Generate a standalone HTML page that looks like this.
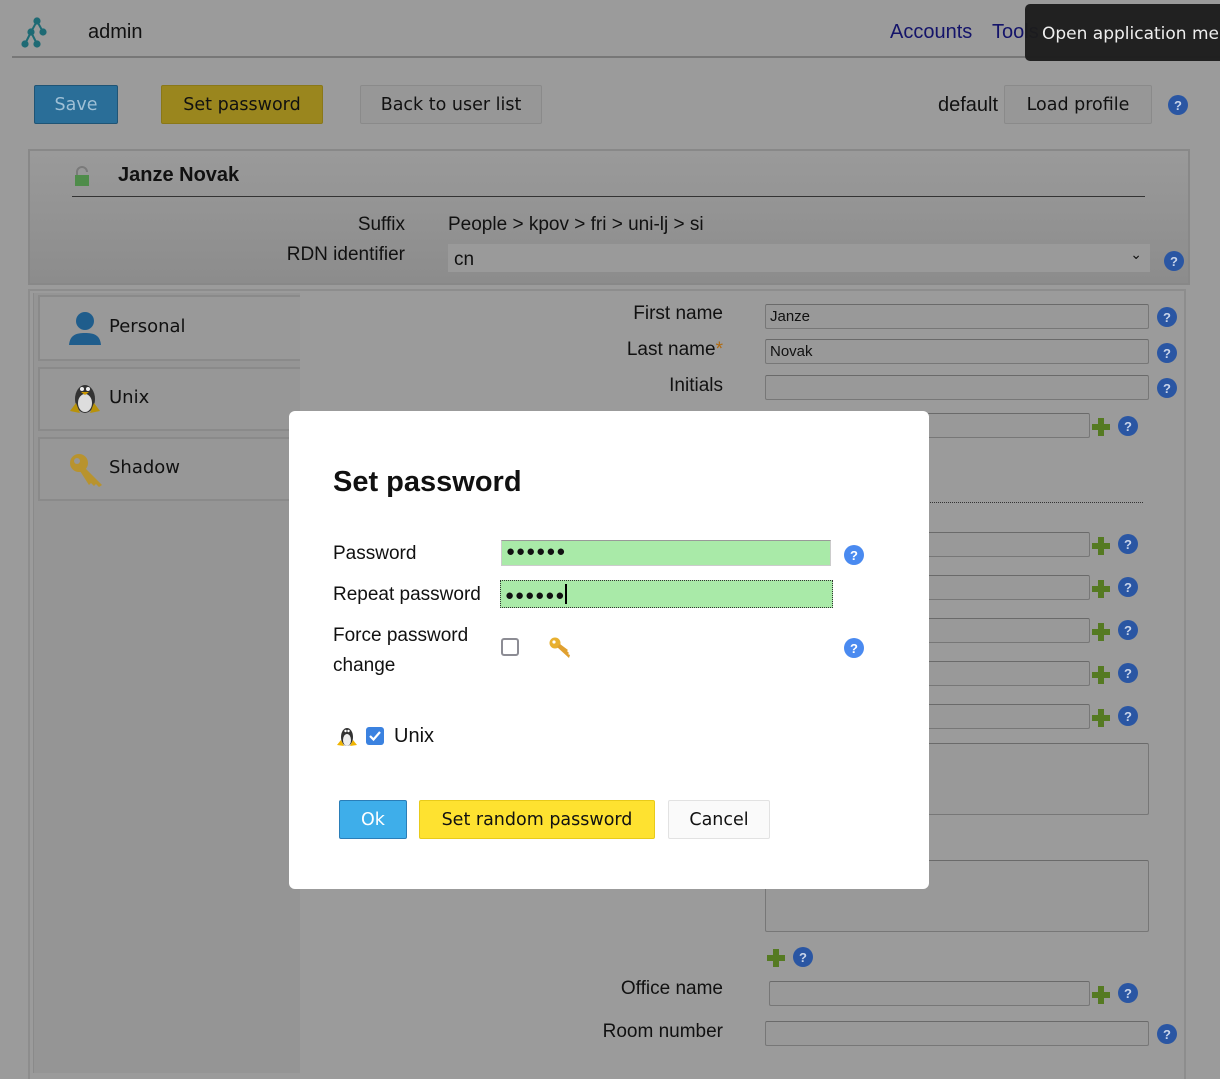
<!DOCTYPE html>
<html><head><meta charset="utf-8"><style>
*{box-sizing:border-box;margin:0;padding:0}
body{width:1220px;height:1070px;overflow:hidden;background:#9b9b9b;font-family:"Liberation Sans",sans-serif;position:relative;color:#111}
.a{position:absolute}
.btn{position:absolute;font-size:19px;display:flex;align-items:center;justify-content:center;border-radius:2px;font-family:"DejaVu Sans","Liberation Sans",sans-serif;font-size:17.5px}
.lbl{position:absolute;font-size:19px;text-align:right;color:#111}
.inp{position:absolute;height:25px;border:1px solid #777;border-top-color:#6a6a6a;background:#999;border-radius:2px;font-size:15px;padding:3px 4px;color:#111}
.h{position:absolute;width:20px;height:20px;border-radius:50%;background:#2a56a3;color:#c8d4ea;font-size:13px;font-weight:bold;display:flex;align-items:center;justify-content:center}
.hb{background:#4a8af0;color:#fff}
.p{position:absolute;width:18px;height:18px}
.p:before{content:"";position:absolute;left:6px;top:0;width:6px;height:18px;background:#557a22}
.p:after{content:"";position:absolute;left:0;top:6px;width:18px;height:6px;background:#557a22}
.tab{position:absolute;left:38px;width:262px;border:2px solid #8a8a8a;border-right:none;background:#979797;font-size:19px;color:#111;font-family:"DejaVu Sans","Liberation Sans",sans-serif;font-size:18px}
</style></head><body>
<svg class="a" style="left:20px;top:17px" width="32" height="32" viewBox="0 0 32 32"><g stroke="#1e6a74" stroke-width="2" fill="#1e6a74"><line x1="17" y1="4" x2="11" y2="15"/><line x1="17" y1="4" x2="23" y2="15"/><line x1="11" y1="15" x2="5" y2="27"/><line x1="11" y1="15" x2="17" y2="27"/><circle cx="17" cy="4" r="2.6"/><circle cx="11" cy="15" r="2.6"/><circle cx="23" cy="15" r="2.6"/><circle cx="5" cy="27" r="2.6"/><circle cx="17" cy="27" r="2.6"/></g></svg>
<div class="a" style="left:88px;top:21px;font-size:20px">admin</div>
<div class="a" style="left:890px;top:21px;font-size:20px;color:#14146a">Accounts</div>
<div class="a" style="left:992px;top:21px;font-size:20px;color:#14146a">Tools</div>
<div class="a" style="left:12px;top:56px;width:1208px;height:2px;background:#777"></div>
<div class="a" style="left:1025px;top:4px;width:200px;height:57px;background:rgba(28,28,28,0.96);border-radius:5px;color:#eee;font-size:18px;padding:20px 0 0 17px;white-space:nowrap;overflow:hidden;font-family:'DejaVu Sans',sans-serif;font-size:17px">Open application menu</div>
<div class="btn" style="left:34px;top:85px;width:84px;height:39px;background:#2a6e98;border:1px solid #1f5475;color:#9fc0d6">Save</div>
<div class="btn" style="left:161px;top:85px;width:162px;height:39px;background:#9a861e;border:1px solid #8a7818">Set password</div>
<div class="btn" style="left:360px;top:85px;width:182px;height:39px;background:#979797;border:1px solid #8a8a8a">Back to user list</div>
<div class="a" style="left:938px;top:94px;font-size:20px">default</div>
<div class="btn" style="left:1004px;top:85px;width:148px;height:39px;background:#979797;border:1px solid #8a8a8a">Load profile</div>
<div class="h" style="left:1168px;top:95px">?</div>
<div class="a" style="left:28px;top:149px;width:1162px;height:136px;border:2px solid #888;background:linear-gradient(#9a9a9a,#8c8c8c)"></div>
<svg class="a" style="left:74px;top:166px" width="16" height="20" viewBox="0 0 16 20"><path d="M3 9V6a5 5 0 0 1 10 0" stroke="#7a7a7a" stroke-width="2" fill="none"/><rect x="1" y="9" width="14" height="11" fill="#4f8c4a"/></svg>
<div class="a" style="left:118px;top:164px;font-size:20px;font-weight:bold">Janze Novak</div>
<div class="a" style="left:72px;top:196px;width:1073px;height:1px;background:#333"></div>
<div class="lbl" style="left:200px;width:205px;top:214px">Suffix</div>
<div class="a" style="left:448px;top:214px;font-size:19px">People &gt; kpov &gt; fri &gt; uni-lj &gt; si</div>
<div class="lbl" style="left:200px;width:205px;top:244px">RDN identifier</div>
<div class="a" style="left:448px;top:244px;width:702px;height:28px;background:#9a9a9a;font-size:19px;padding:5px 6px">cn<span style="position:absolute;right:8px;top:2px;font-size:14px">&#8964;</span></div>
<div class="h" style="left:1164px;top:251px">?</div>
<div class="a" style="left:28px;top:289px;width:1158px;height:790px;border:2px solid #8d8d8d;border-bottom:none"></div>
<div class="a" style="left:33px;top:293px;width:267px;height:780px;background:#959595;border-left:1px solid #8a8a8a"></div>
<div class="tab" style="top:295px;height:66px;background:#999"><svg class="a" style="left:29px;top:14px" width="32" height="34" viewBox="0 0 32 34"><circle cx="16" cy="10" r="9" fill="#1f5d8c"/><path d="M0 34c1-10 7-12 16-12s15 2 16 12z" fill="#1f5d8c"/></svg><span class="a" style="left:69px;top:19px">Personal</span></div>
<div class="tab" style="top:367px;height:64px"><svg class="a" style="left:29px;top:12px" width="32" height="34" viewBox="0 0 32 34"><ellipse cx="16" cy="18" rx="10" ry="14" fill="#333"/><ellipse cx="16" cy="22" rx="7" ry="9" fill="#ddd"/><circle cx="13" cy="8" r="2" fill="#eee"/><circle cx="19" cy="8" r="2" fill="#eee"/><path d="M12 11h8l-4 3z" fill="#c90"/><path d="M1 30l6-8 4 10zM31 30l-6-8-4 10z" fill="#b8920a"/></svg><span class="a" style="left:69px;top:18px">Unix</span></div>
<div class="tab" style="top:437px;height:64px"><svg class="a" style="left:29px;top:14px" width="34" height="34" viewBox="0 0 34 34"><circle cx="10" cy="10" r="9" fill="#b8932e"/><circle cx="8" cy="8" r="3" fill="#979797"/><path d="M14 13l19 19-3 2-3-3-2 2-3-3-2 2-9-14z" fill="#b8932e"/></svg><span class="a" style="left:69px;top:18px">Shadow</span></div>
<div class="lbl" style="left:500px;width:223px;top:303px">First name</div>
<div class="inp" style="left:765px;top:304px;width:384px">Janze</div><div class="h" style="left:1157px;top:307px">?</div>
<div class="lbl" style="left:500px;width:223px;top:339px">Last name<span style="color:#b06a10">*</span></div>
<div class="inp" style="left:765px;top:339px;width:384px">Novak</div><div class="h" style="left:1157px;top:343px">?</div>
<div class="lbl" style="left:500px;width:223px;top:375px">Initials</div>
<div class="inp" style="left:765px;top:375px;width:384px"></div><div class="h" style="left:1157px;top:378px">?</div>
<div class="inp" style="left:765px;top:413px;width:325px"></div><div class="p" style="left:1092px;top:418px"></div><div class="h" style="left:1118px;top:416px">?</div>
<div class="a" style="left:765px;top:502px;width:378px;border-top:1px dotted #333"></div>
<div class="inp" style="left:765px;top:532px;width:325px"></div><div class="p" style="left:1092px;top:537px"></div><div class="h" style="left:1118px;top:534px">?</div>
<div class="inp" style="left:765px;top:575px;width:325px"></div><div class="p" style="left:1092px;top:580px"></div><div class="h" style="left:1118px;top:577px">?</div>
<div class="inp" style="left:765px;top:618px;width:325px"></div><div class="p" style="left:1092px;top:623px"></div><div class="h" style="left:1118px;top:620px">?</div>
<div class="inp" style="left:765px;top:661px;width:325px"></div><div class="p" style="left:1092px;top:666px"></div><div class="h" style="left:1118px;top:663px">?</div>
<div class="inp" style="left:765px;top:704px;width:325px"></div><div class="p" style="left:1092px;top:709px"></div><div class="h" style="left:1118px;top:706px">?</div>
<div class="inp" style="left:765px;top:743px;width:384px;height:72px"></div>
<div class="inp" style="left:765px;top:860px;width:384px;height:72px"></div>
<div class="p" style="left:767px;top:949px"></div><div class="h" style="left:793px;top:947px">?</div>
<div class="lbl" style="left:500px;width:223px;top:978px">Office name</div>
<div class="inp" style="left:769px;top:981px;width:321px"></div><div class="p" style="left:1092px;top:986px"></div><div class="h" style="left:1118px;top:983px">?</div>
<div class="lbl" style="left:500px;width:223px;top:1021px">Room number</div>
<div class="inp" style="left:765px;top:1021px;width:384px"></div><div class="h" style="left:1157px;top:1024px">?</div>
<div class="a" style="left:289px;top:411px;width:640px;height:478px;background:#fff;border-radius:6px"></div>
<div class="a" style="left:333px;top:466px;font-size:29px;font-weight:bold">Set password</div>
<div class="a" style="left:333px;top:543px;font-size:19px">Password</div>
<div class="a" style="left:501px;top:540px;width:330px;height:26px;background:#a9eaa8;border:1px solid #ccc;border-top-color:#999;font-size:15px;padding:2px 4px;letter-spacing:1px">●●●●●●</div>
<div class="h hb" style="left:844px;top:545px">?</div>
<div class="a" style="left:333px;top:584px;font-size:19px">Repeat password</div>
<div class="a" style="left:500px;top:580px;width:333px;height:28px;background:#a9eaa8;border:1px dotted #333;font-size:15px;padding:3px 4px;letter-spacing:1px">●●●●●●<span style="display:inline-block;width:2px;height:20px;background:#000;vertical-align:-4px"></span></div>
<div class="a" style="left:333px;top:621px;font-size:19px;line-height:30px">Force password<br>change</div>
<div class="a" style="left:501px;top:638px;width:18px;height:18px;border:2px solid #8c8c94;border-radius:3px"></div>
<svg class="a" style="left:549px;top:637px" width="22" height="22" viewBox="0 0 22 22"><circle cx="6" cy="6" r="5.5" fill="#e8b030"/><circle cx="5" cy="5" r="1.6" fill="#fff"/><path d="M8 10l12 11 1-3-2-1 1-1-2-2 1-1-8-6z" fill="#e0a030"/></svg>
<div class="h hb" style="left:844px;top:638px">?</div>
<svg class="a" style="left:337px;top:725px" width="20" height="22" viewBox="0 0 20 22"><ellipse cx="10" cy="12" rx="6" ry="9" fill="#333"/><ellipse cx="10" cy="15" rx="4" ry="6" fill="#eee"/><circle cx="8.5" cy="6" r="1.2" fill="#fff"/><circle cx="11.5" cy="6" r="1.2" fill="#fff"/><path d="M0 20l4-5 3 6zM20 20l-4-5-3 6z" fill="#f0b400"/></svg>
<div class="a" style="left:366px;top:727px;width:18px;height:18px;background:#3b82e0;border-radius:3px"><svg width="18" height="18"><path d="M4 9l3.5 3.5L14 5" stroke="#fff" stroke-width="2.2" fill="none"/></svg></div>
<div class="a" style="left:394px;top:725px;font-size:20px">Unix</div>
<div class="btn" style="left:339px;top:800px;width:68px;height:39px;background:#3eaeea;border:1px solid #2a7eb8;color:#fff">Ok</div>
<div class="btn" style="left:419px;top:800px;width:236px;height:39px;background:#fee230;border:1px solid #e8cb1a">Set random password</div>
<div class="btn" style="left:668px;top:800px;width:102px;height:39px;background:#fafafa;border:1px solid #e2e2e2">Cancel</div>
</body></html>
